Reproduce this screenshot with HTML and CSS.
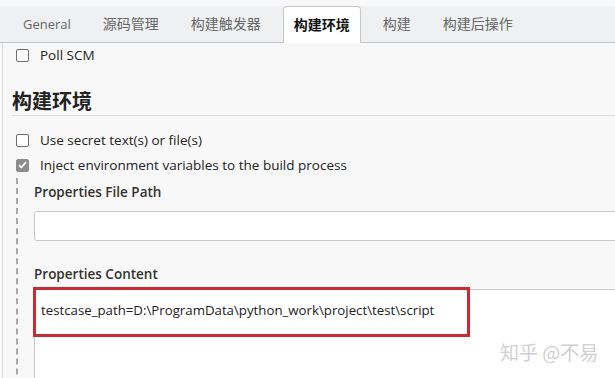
FILE: index.html
```html
<!DOCTYPE html>
<html lang="zh-CN">
<head>
    <meta charset="UTF-8">
    <meta name="viewport" content="width=device-width, initial-scale=1.0">
    <title>构建环境</title>
    <link rel="stylesheet" href="styles.css">
</head>
<body>
    <div class="tabbar">
        <span class="tab latin">General</span>
        <span class="tab">源码管理</span>
        <span class="tab">构建触发器</span>
        <span class="tab active">构建环境</span>
        <span class="tab">构建</span>
        <span class="tab">构建后操作</span>
    </div>

    <div class="panel">
        <label class="cb-row">
            <span class="cb"></span>
            <span class="cb-text">Poll SCM</span>
        </label>

        <h2 class="section-title">构建环境</h2>

        <label class="cb-row first">
            <span class="cb"></span>
            <span class="cb-text">Use secret text(s) or file(s)</span>
        </label>
        <label class="cb-row">
            <span class="cb checked">
                <svg width="9" height="8" viewBox="0 0 9 8"><path d="M1 4.2 L3.4 6.5 L8 1.2" fill="none" stroke="#fff" stroke-width="1.8"/></svg>
            </span>
            <span class="cb-text">Inject environment variables to the build process</span>
        </label>

        <div class="nested">
            <div class="field-label">Properties File Path</div>
            <input class="text-input" type="text">

            <div class="field-label second">Properties Content</div>
            <div class="area-wrap">
                <textarea class="text-area" readonly>testcase_path=D:\ProgramData\python_work\project\test\script</textarea>
                <div class="highlight"></div>
            </div>
        </div>
    </div>

    <div class="watermark">知乎 @不易</div>
</body>
</html>
```

FILE: styles.css
```css
/* base */
html, body {
    height: 100%;
}

body {
    margin: 0;
    display: flex;
    flex-direction: column;
    background: #f8f8f8;
    font-family: "Open Sans", "Noto Sans", "Noto Sans CJK SC", sans-serif;
    color: #333;
    overflow: hidden;
}

.tabbar {
    display: flex;
    flex-shrink: 0;
    align-items: flex-end;
    gap: 12px;
    margin-top: 6px;
    height: 36px;
    padding-left: 13px;
    background: #eef0f2;
    border-bottom: 1px solid #c8c8c8;
    font-family: "Open Sans", "Noto Sans CJK SC", sans-serif;
    font-size: 14px;
}

.tab {
    padding: 0 10px;
    line-height: 36px;
    color: #666;
}

.tab.latin {
    font-size: 13px;
}

.tab.active {
    position: relative;
    top: 1px;
    background: #fff;
    color: #111;
    font-weight: 600;
    border: 1px solid #c8c8c8;
    border-bottom: none;
    border-radius: 4px 4px 0 0;
}

.panel {
    flex: 1;
    min-height: 0;
    overflow: hidden;
    margin-left: 2px;
    padding-left: 9px;
    padding-top: 2px;
    border-left: 1px solid #dcdcdc;
}

.cb-row {
    display: flex;
    align-items: center;
    gap: 11px;
    height: 20px;
    padding-left: 4px;
    margin-bottom: 5px;
    font-size: 13.5px;
    color: #222;
}

.cb-row.first {
    margin-top: 14px;
}

.cb {
    display: flex;
    align-items: center;
    justify-content: center;
    box-sizing: border-box;
    width: 13px;
    height: 13px;
    border: 1px solid #6e6e6e;
    border-radius: 2px;
    background: #fff;
}

.cb.checked {
    background: #8c8c8c;
    border-color: #8c8c8c;
}

.section-title {
    margin: 24px 0 0 0;
    line-height: 26px;
    font-size: 20px;
    font-weight: 700;
    color: #222;
    border-bottom: 1px solid #dedede;
}

.nested {
    margin-left: 4px;
    margin-top: -2px;
    padding-left: 16px;
    padding-top: 4px;
    height: 100%;
    border-left: 2px dashed #a8a8a8;
}

.field-label {
    line-height: 20px;
    font-size: 13.5px;
    font-weight: 600;
    color: #333;
}

.field-label.second {
    margin-top: 23px;
}

.text-input {
    display: block;
    box-sizing: border-box;
    width: calc(100% + 20px);
    height: 30px;
    margin: 9px 0 0 0;
    border: 1px solid #c8c8c8;
    border-radius: 3px;
    background: #fff;
}

.area-wrap {
    position: relative;
    margin-top: 5px;
}

.text-area {
    display: block;
    box-sizing: border-box;
    width: calc(100% + 20px);
    height: 140px;
    margin: 0;
    padding: 10px 6px;
    border: 1px solid #c8c8c8;
    border-radius: 3px;
    background: #fff;
    resize: none;
    font-family: "Open Sans", "Noto Sans", sans-serif;
    font-size: 13.25px;
    line-height: 20px;
    color: #222;
}

/* red annotation box drawn over the textarea */
.highlight {
    position: absolute;
    left: -1px;
    top: -2px;
    width: 437px;
    height: 50px;
    box-sizing: border-box;
    border: 3px solid #c92a35;
}

.watermark {
    position: absolute;
    left: 500px;
    top: 338px;
    font-family: "Noto Sans CJK SC", sans-serif;
    font-size: 19px;
    color: #d0d0d0;
    text-shadow: 1px 1px 0 #fff;
}
```
